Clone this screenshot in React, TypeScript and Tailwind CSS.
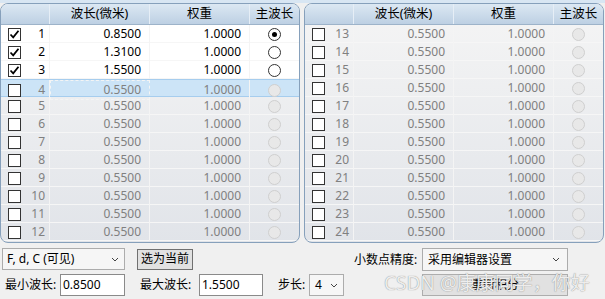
import React from "react";

type Row = {
  idx: number;
  wave: string;
  weight: string;
  on: boolean;
  enabled: boolean;
  primary?: boolean;
  selected?: boolean;
};

const leftRows: Row[] = Array.from({ length: 12 }, (_, i) => {
  const idx = i + 1;
  if (idx === 1) return { idx, wave: "0.8500", weight: "1.0000", on: true, enabled: true, primary: true };
  if (idx === 2) return { idx, wave: "1.3100", weight: "1.0000", on: true, enabled: true };
  if (idx === 3) return { idx, wave: "1.5500", weight: "1.0000", on: true, enabled: true };
  return { idx, wave: "0.5500", weight: "1.0000", on: false, enabled: false, selected: idx === 4 };
});

const rightRows: Row[] = Array.from({ length: 12 }, (_, i) => ({
  idx: i + 13,
  wave: "0.5500",
  weight: "1.0000",
  on: false,
  enabled: false,
}));

const font = "font-['Segoe_UI','Noto_Sans','Noto_Sans_CJK_SC',sans-serif]";

const CheckBox = ({ on }: { on: boolean }) => (
  <div className="w-[13px] h-[13px] border border-[#333] bg-white flex items-center justify-center">
    {on && (
      <svg width="11" height="11" viewBox="0 0 11 11">
        <path d="M1.5 5.5 L4.2 8.3 L9.5 1.8" fill="none" stroke="#000" strokeWidth="1.8" />
      </svg>
    )}
  </div>
);

const Radio = ({ enabled, checked }: { enabled: boolean; checked?: boolean }) => (
  <div
    className={`w-[13px] h-[13px] rounded-full border flex items-center justify-center ${
      enabled ? "border-[#333] bg-white" : "border-[#cfcfcf] bg-[#e8e8e8]"
    }`}>
    {checked && <div className="w-[5px] h-[5px] rounded-full bg-black" />}
  </div>
);

const WaveTable = ({ rows }: { rows: Row[] }) => (
  <div className="flex-1 rounded-lg border border-[#86a0bb] overflow-hidden bg-gradient-to-b from-[#f5f5f5] to-[#e1e4e9]">
    {/* header */}
    <div className="grid grid-cols-[49px_100px_100px_1fr] h-[21px] bg-gradient-to-b from-[#dce8f3] to-[#bdd0e3] border-b border-[#9db3c9] text-[12.5px] text-black">
      <div className="border-r border-[#e6eef6]" />
      <div className="border-r border-[#e6eef6] flex items-center justify-center">波长(微米)</div>
      <div className="border-r border-[#e6eef6] flex items-center justify-center">权重</div>
      <div className="flex items-center justify-center">主波长</div>
    </div>
    {rows.map((r) => (
      <div
        key={r.idx}
        className={`grid grid-cols-[49px_100px_100px_1fr] h-[18px] text-[12px] ${
          r.enabled ? "bg-white text-black" : "text-[#808080]"
        } ${r.selected ? "bg-[#cce4f7] border-y border-[#a6cdee]" : "border-b border-[#f6f6f6]"}`}>
        <div className="flex items-center pl-[7px] border-r border-[#f4f4f4]">
          <CheckBox on={r.on} />
          <span className="flex-1 text-right pr-[4px]">{r.idx}</span>
        </div>
        <div
          className={`flex items-center justify-end pr-[8px] border-r border-[#f4f4f4] ${
            r.selected ? "border border-dashed border-[#555]" : ""
          }`}>
          {r.wave}
        </div>
        <div className="flex items-center justify-end pr-[8px] border-r border-[#f4f4f4]">{r.weight}</div>
        <div className="flex items-center justify-center">
          <Radio enabled={r.enabled} checked={r.primary} />
        </div>
      </div>
    ))}
  </div>
);

const Chevron = () => (
  <svg width="8" height="5" viewBox="0 0 8 5" className="shrink-0">
    <path d="M1 1 L4 4 L7 1" fill="none" stroke="#444" strokeWidth="1" />
  </svg>
);

export default function App() {
  return (
    <div className={`relative w-[605px] h-[299px] bg-[#f0f0f0] ${font} text-[12px] text-black overflow-hidden`}>
      <div className="h-[3px] bg-[#d8e6f3]" />
      <div className="flex gap-[4px] pr-[1px] h-[240px]">
        <WaveTable rows={leftRows} />
        <WaveTable rows={rightRows} />
      </div>

      <div className="flex items-start mt-[5px] px-[2px]">
        {/* left controls */}
        <div className="flex flex-col gap-[4px]">
          <div className="flex items-center gap-[12px]">
            <div className="w-[123px] h-[22px] border border-[#acacac] bg-[#f6f6f6] flex items-center pl-[4px] pr-[5px] text-[12px]">
              <span className="flex-1">F, d, C (可见)</span>
              <Chevron />
            </div>
            <div className="w-[56px] h-[21px] border border-[#707070] bg-[#e1e1e1] flex items-center justify-center">
              选为当前
            </div>
          </div>
          <div className="flex items-center">
            <span className="pl-[3px] w-[58px]">最小波长:</span>
            <div className="w-[65px] h-[22px] border border-[#8a8a8a] bg-white flex items-center pl-[2px]">0.8500</div>
            <span className="ml-[15px] w-[59px]">最大波长:</span>
            <div className="w-[64px] h-[22px] border border-[#8a8a8a] bg-white flex items-center pl-[2px]">1.5500</div>
            <span className="ml-[15px] w-[31px]">步长:</span>
            <div className="w-[35px] h-[22px] border border-[#acacac] bg-[#f6f6f6] flex items-center pl-[5px] pr-[5px]">
              <span className="flex-1">4</span>
              <Chevron />
            </div>
          </div>
        </div>

        {/* right controls */}
        <div className="flex flex-col gap-[3px] ml-[10px]">
          <div className="flex items-center">
            <span className="w-[68px]">小数点精度:</span>
            <div className="w-[146px] h-[23px] border border-[#acacac] bg-[#f6f6f6] flex items-center pl-[5px] pr-[7px]">
              <span className="flex-1">采用编辑器设置</span>
              <Chevron />
            </div>
          </div>
          <div className="ml-[68px] w-[146px] h-[22px] border border-[#adadad] bg-[#e1e1e1] flex items-center justify-center">
            重新积分
          </div>
        </div>
      </div>

      {/* watermark */}
      <div className="absolute left-[384px] top-[270px] text-[19px] leading-[26px] text-[#ededed] whitespace-nowrap font-['Noto_Sans','Noto_Sans_CJK_SC',sans-serif] [text-shadow:0_0_1px_#777]">
        CSDN @康康同学，你好
      </div>
    </div>
  );
}
